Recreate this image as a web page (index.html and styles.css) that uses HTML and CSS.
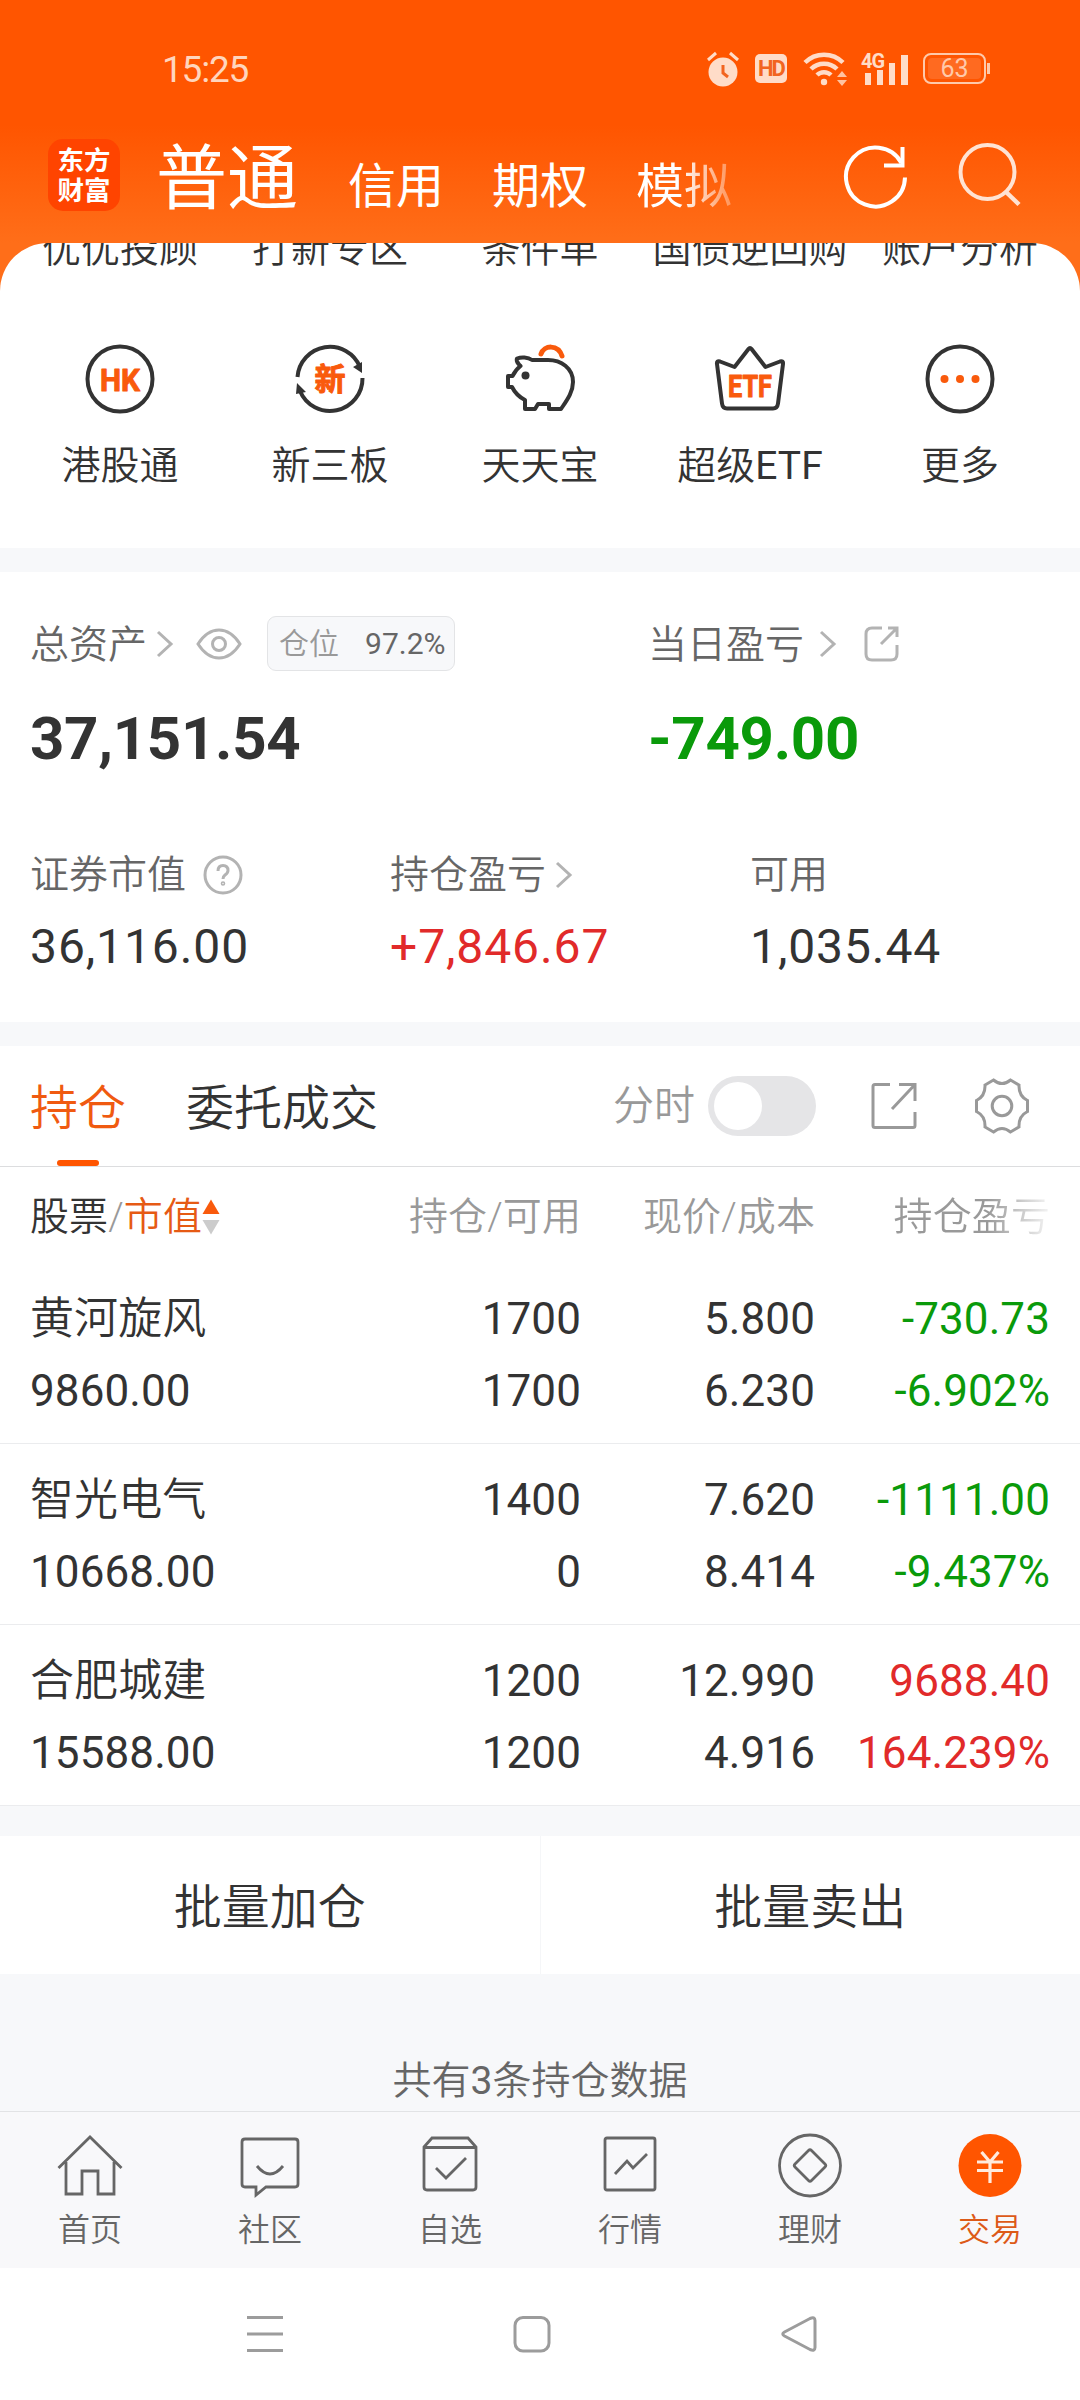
FILE: index.html
```html
<!DOCTYPE html>
<html lang="zh-CN">
<head>
  <meta charset="UTF-8">
  <meta name="viewport" content="width=device-width, initial-scale=1.0">
  <title>东方财富 - 交易</title>
  <link rel="stylesheet" href="styles.css">
</head>
<body>
  <header class="header">
    <div class="status-bar">
      <span class="time">15:25</span>
      <div class="status-icons">
        <svg class="alarm" width="34" height="38" viewBox="0 0 34 38">
          <circle cx="17" cy="22" r="14.5" fill="#ffdcc8"/>
          <path d="M2 10L10 3M32 10L24 3" stroke="#ffdcc8" stroke-width="3" fill="none"/>
          <path d="M17 15v8l5 4" stroke="#f26420" stroke-width="3" fill="none"/>
        </svg>
        <span class="hd">HD</span>
        <svg class="wifi" width="46" height="38" viewBox="0 0 46 38">
          <g fill="none" stroke="#ffdcc8" stroke-width="4.500">
            <path d="M2 12.500a27 27 0 0 1 38 0"/>
            <path d="M8 19a18.500 18.500 0 0 1 26 0"/>
            <path d="M14 25a10 10 0 0 1 14 0"/>
          </g>
          <circle cx="21" cy="32" r="3.200" fill="#ffdcc8"/>
          <path d="M34 27l5-6 5 6zM34 30h10l-5 6z" fill="#ffc3a0"/>
        </svg>
        <div class="signal">
          <span class="net">4G</span>
          <svg width="48" height="38" viewBox="0 0 48 38">
            <path d="M4 23h6v12H4zM16 20h6v15h-6zM28 13h6v22h-6zM40 5h7v30h-7z" fill="#ffdcc8"/>
          </svg>
        </div>
        <div class="battery"><span>63</span></div>
      </div>
    </div>
    <div class="top-nav">
      <div class="logo">东方<br>财富</div>
      <div class="accounts">
        <span class="account active">普通</span>
        <span class="account">信用</span>
        <span class="account">期权</span>
        <span class="account fade">模拟</span>
      </div>
      <svg class="refresh" width="66" height="66" viewBox="0 0 66 66">
        <path d="M62 33.500A29.500 29.500 0 1 1 58.500 19" fill="none" stroke="#fff" stroke-width="4"/>
        <path d="M59.500 3v18.500H41" fill="none" stroke="#fff" stroke-width="4"/>
      </svg>
      <svg class="search" width="66" height="66" viewBox="0 0 66 66">
        <circle cx="30.500" cy="29" r="27" fill="none" stroke="#ffe3d3" stroke-width="4"/>
        <path d="M48 48L62 61.500" stroke="#ffe3d3" stroke-width="4.500"/>
      </svg>
    </div>
  </header>

  <!-- Shortcuts -->
  <section class="shortcuts">
    <div class="grid clipped">
      <span>优优投顾</span>
      <span>打新专区</span>
      <span>条件单</span>
      <span>国债逆回购</span>
      <span>账户分析</span>
    </div>
    <div class="grid">
      <div class="shortcut">
        <svg width="72" height="72" viewBox="0 0 72 72">
          <circle cx="36" cy="36" r="32.500" fill="none" stroke="#333" stroke-width="4"/>
          <text x="36" y="47.500" class="icon-text" font-size="32" textLength="40" lengthAdjust="spacingAndGlyphs">HK</text>
        </svg>
        <span>港股通</span>
      </div>
      <div class="shortcut">
        <svg width="72" height="72" viewBox="0 0 72 72">
          <path d="M3.500 34A32.500 32.500 0 0 1 66 24M68.500 35A32.500 32.500 0 0 1 6 48" fill="none" stroke="#333" stroke-width="4"/>
          <path d="M59 24l9-5v11zM3 40l9 9-10 2z" fill="#333"/>
          <text x="36" y="47" class="icon-text" font-size="31">新</text>
        </svg>
        <span>新三板</span>
      </div>
      <div class="shortcut">
        <svg width="72" height="72" viewBox="0 0 72 72">
          <path d="M28 17C24 14 17 14 13 15.500c-1 3 1 5 3.500 7.500-4 3-6 6-8 10H4v11h4c3 6 7 10 13 13v9h10l3-5h11v5h12c6-9 12-17 12-27 0-14-12-22-25-22z" fill="none" stroke="#333" stroke-width="4" stroke-linejoin="round"/>
          <circle cx="21.500" cy="32.500" r="4" fill="#333"/>
          <path d="M37 11c3-9 17-10 21 2" fill="none" stroke="#f95a0c" stroke-width="5" stroke-linecap="round"/>
        </svg>
        <span>天天宝</span>
      </div>
      <div class="shortcut">
        <svg width="72" height="72" viewBox="0 0 72 72">
          <path d="M6 18.500l14.500 5.500L34.500 6q1.500-2 3 0l14 18L66 18.500q3.500-1 3 2.500l-5 39.500q-.7 5-5 5H13q-4.300 0-5-5L3 21q-.5-3.500 3-2.500z" fill="none" stroke="#333" stroke-width="4" stroke-linejoin="round"/>
          <text x="36" y="53.500" class="icon-text" font-size="31" textLength="44" lengthAdjust="spacingAndGlyphs">ETF</text>
        </svg>
        <span>超级<span class="latin">ETF</span></span>
      </div>
      <div class="shortcut">
        <svg width="72" height="72" viewBox="0 0 72 72">
          <circle cx="36" cy="36" r="32.500" fill="none" stroke="#333" stroke-width="4"/>
          <g fill="#f95a0c">
            <circle cx="20.500" cy="36" r="4"/>
            <circle cx="36" cy="36" r="4"/>
            <circle cx="51.500" cy="36" r="4"/>
          </g>
        </svg>
        <span>更多</span>
      </div>
    </div>
  </section>

  <!-- Assets -->
  <section class="assets">
    <div class="total-row">
      <div class="total">
        <div class="label">
          总资产
          <svg class="chevron first" width="18" height="28" viewBox="0 0 18 28"><path d="M2 2l13 12L2 26"/></svg>
          <svg class="eye" width="46" height="32" viewBox="0 0 46 32">
            <path d="M2 16Q11 2 23 2t21 14Q35 30 23 30T2 16z"/>
            <circle cx="23" cy="16" r="6.500"/>
          </svg>
          <span class="position"><em>仓位</em><span class="latin">97.2%</span></span>
        </div>
        <div class="big">37,151.54</div>
      </div>
      <div class="today">
        <div class="label">
          当日盈亏
          <svg class="chevron" width="18" height="28" viewBox="0 0 18 28"><path d="M2 2l13 12L2 26"/></svg>
          <svg class="share" width="36" height="36" viewBox="0 0 36 36">
            <path d="M18 2H8Q2 2 2 8v20q0 6 6 6h19q6 0 6-6V19M24 2h9v9M33 2L17 18"/>
          </svg>
        </div>
        <div class="big green">-749.00</div>
      </div>
    </div>
    <div class="detail-row">
      <div class="detail">
        <div class="label">
          证券市值
          <svg class="help" width="40" height="40" viewBox="0 0 40 40">
            <circle cx="20" cy="20" r="18"/>
            <path d="M15 16q0-5.500 5-5.500t5 5q0 2.500-3 4.500-2 1.500-2 4"/>
            <circle cx="20" cy="28.500" r=".8"/>
          </svg>
        </div>
        <div class="value">36,116.00</div>
      </div>
      <div class="detail">
        <div class="label">
          持仓盈亏
          <svg class="chevron near" width="18" height="28" viewBox="0 0 18 28"><path d="M2 2l13 12L2 26"/></svg>
        </div>
        <div class="value red">+7,846.67</div>
      </div>
      <div class="detail">
        <div class="label">可用</div>
        <div class="value">1,035.44</div>
      </div>
    </div>
  </section>

  <!-- Holdings -->
  <section class="holdings">
    <div class="tabs">
      <span class="tab active">持仓</span>
      <span class="tab">委托成交</span>
      <span class="minute">分时</span>
      <span class="toggle"></span>
      <svg class="open" width="48" height="48" viewBox="0 0 48 48">
        <path d="M20 2.500H5Q3 2.500 3 4.500v39q0 2 2 2h38q2 0 2-2V30M29 2.500h16V19M45 2.500L22 27"/>
      </svg>
      <svg class="gear" width="56" height="56" viewBox="0 0 56 56">
        <path d="M19.500 2q8.500 7 17 0L45 7q-.5 11 8.500 15.500v11Q44.500 38 45 49l-8.500 5q-8.500-7-17 0L11 49q.5-11-8.500-15.500v-11Q11.500 18 11 7z"/>
        <circle cx="28" cy="28" r="9.800"/>
      </svg>
    </div>
    <div class="row head">
      <div class="sort"><span class="dark">股票</span>/<span class="orange">市值</span>
        <svg width="18" height="36" viewBox="0 0 18 36">
          <path d="M9 .5l8.500 14.500H.5z" fill="#f95a0c"/>
          <path d="M9 35.500l8.500-14.500H.5z" fill="#ccc"/>
        </svg>
      </div>
      <div>持仓/可用</div>
      <div>现价/成本</div>
      <div class="cut">持仓盈亏</div>
    </div>
    <div class="row">
      <div><span class="name">黄河旋风</span><br>9860.00</div>
      <div>1700<br>1700</div>
      <div>5.800<br>6.230</div>
      <div class="green">-730.73<br>-6.902%</div>
    </div>
    <div class="row">
      <div><span class="name">智光电气</span><br>10668.00</div>
      <div>1400<br>0</div>
      <div>7.620<br>8.414</div>
      <div class="green">-1111.00<br>-9.437%</div>
    </div>
    <div class="row">
      <div><span class="name">合肥城建</span><br>15588.00</div>
      <div>1200<br>1200</div>
      <div>12.990<br>4.916</div>
      <div class="red">9688.40<br>164.239%</div>
    </div>
  </section>

  <div class="batch">
    <button>批量加仓</button>
    <button>批量卖出</button>
  </div>
  <p class="count">共有<span class="latin">3</span>条持仓数据</p>

  <nav class="tab-bar">
    <a>
      <svg width="66" height="66" viewBox="0 0 66 66"><path d="M1.500 35L33 4l31.500 31M9 29v32h16V38h16v23h16V29"/></svg>
      首页
    </a>
    <a>
      <svg width="66" height="66" viewBox="0 0 66 66"><path d="M8 6h50q3 0 3 3v42q0 3-3 3H29l-10 8v-8H8q-3 0-3-3V9q0-3 3-3zM20 33q13 16 26 0"/></svg>
      社区
    </a>
    <a>
      <svg width="66" height="66" viewBox="0 0 66 66"><path d="M7 14l8-9h36l8 9v40q0 3-3 3H10q-3 0-3-3zM7 14.500h52M19 35l10 10 20-20"/></svg>
      自选
    </a>
    <a>
      <svg width="66" height="66" viewBox="0 0 66 66"><path d="M10 5h46q2 0 2 2v48q0 2-2 2H10q-2 0-2-2V7q0-2 2-2zM18 41l12-13 6 7 14-14"/></svg>
      行情
    </a>
    <a>
      <svg width="66" height="66" viewBox="0 0 66 66"><circle cx="33" cy="32.500" r="30.500"/><path d="M31.500 17.500q1.500-1.500 3 0l13.500 13.500q1.500 1.500 0 3L34.500 47.500q-1.500 1.500-3 0L18 34q-1.500-1.500 0-3z"/></svg>
      理财
    </a>
    <a class="active">
      <svg width="66" height="66" viewBox="0 0 66 66"><circle class="disc" cx="33" cy="32.500" r="31.500"/><path class="yen" d="M24.500 19L33 29l8.500-10M20 29h26M20 37.500h26M33 29v21"/></svg>
      交易
    </a>
  </nav>

  <div class="system-nav">
    <svg width="40" height="40" viewBox="0 0 40 40"><path d="M2 3.500h36M2 20h36M2 36.500h36"/></svg>
    <svg width="40" height="40" viewBox="0 0 40 40"><rect x="3" y="3.500" width="34" height="33.500" rx="8"/></svg>
    <svg width="40" height="40" viewBox="0 0 40 40"><path d="M31 4.500q5-2 5 2v27q0 4-5 2L5.500 22q-3.500-2 0-4z"/></svg>
  </div>
</body>
</html>
```
FILE: styles.css
```css
* {
  box-sizing: border-box;
  margin: 0;
  padding: 0;
}

body {
  width: 1080px;
  height: 2400px;
  overflow: hidden;
  font-family: Roboto, "Noto Sans CJK SC", sans-serif;
  font-weight: 350;
  color: #333;
  background-color: #f7f8fa;
}

svg {
  display: block;
  flex-shrink: 0;
}

.latin {
  font-weight: 400;
}

.green {
  color: #0a9a0a;
}

.red {
  color: #e12a2a;
}

.orange {
  color: #e65a14;
}

/* header */
.header {
  height: 292px;
  background: linear-gradient(#ff5500 125px, #ff6e19 243px);
}

.status-bar {
  display: flex;
  align-items: center;
  justify-content: space-between;
  height: 139px;
  padding: 0 93px 0 162px;
}

.time {
  font-size: 37px;
  font-weight: 400;
  letter-spacing: -1.2px;
  color: #ffd5bd;
}

.status-icons {
  display: flex;
  align-items: center;
  height: 38px;
  margin-top: -2px;
}

.hd {
  width: 32px;
  height: 29px;
  margin: 0 16px 0 15px;
  border-radius: 5px;
  background-color: #ffdcc8;
  color: #f26420;
  font-size: 22px;
  font-weight: 700;
  line-height: 30px;
  letter-spacing: -2px;
  text-align: center;
}

.signal {
  position: relative;
  margin: 0 14px 0 12px;
}

.net {
  position: absolute;
  left: 0;
  top: 1px;
  font-size: 20px;
  font-weight: 700;
  line-height: 20px;
  letter-spacing: -1px;
  color: #ffdcc8;
}

.battery {
  position: relative;
  width: 63px;
  height: 31px;
  margin-right: 1px;
  border: 2px solid #ffc9aa;
  border-radius: 8px;
  padding: 3px;
}

.battery span {
  display: block;
  height: 21px;
  border-radius: 4px;
  background-color: #ff6a20;
  color: #ffc9aa;
  font-size: 25px;
  font-weight: 400;
  line-height: 22px;
  text-align: center;
}

.battery::after {
  content: "";
  position: absolute;
  right: -6px;
  top: 8px;
  width: 3px;
  height: 11px;
  background-color: #ffc9aa;
}

.top-nav {
  display: flex;
  padding: 0 57px 0 48px;
}

.logo {
  width: 72px;
  height: 72px;
  padding-top: 7px;
  border-radius: 15px;
  background-color: #ff4400;
  color: #fff;
  font-size: 26.5px;
  font-weight: 700;
  line-height: 30px;
  text-align: center;
}

.accounts {
  display: flex;
  align-items: baseline;
  flex: 1;
  height: 90px;
  margin-top: 4px;
  margin-left: 36px;
  color: #fff;
  font-size: 48px;
  font-weight: 400;
  line-height: 72px;
}

.account {
  margin-right: 48px;
}

.account.active {
  font-size: 71px;
  margin-right: 50px;
}

.account.fade {
  background: linear-gradient(90deg, #fff 45%, rgba(255, 255, 255, 0.3));
  background-clip: text;
  color: transparent;
}

.refresh {
  margin: 5px 0 0;
}

.search {
  margin: 4px 0 0 48px;
}

/* shortcuts */
.shortcuts {
  height: 305px;
  margin-top: -49px;
  border-radius: 48px 48px 0 0;
  overflow: hidden;
  background-color: #fff;
  font-size: 39px;
  line-height: 40px;
}

.grid {
  display: grid;
  grid-template-columns: repeat(5, 210px);
  justify-content: center;
  text-align: center;
  white-space: nowrap;
}

.grid.clipped {
  margin: -14px 0 74px;
}

.grid.clipped span {
  margin: 0 -20px;
}

.shortcut {
  display: flex;
  flex-direction: column;
  align-items: center;
  gap: 31px;
}

.icon-text {
  fill: #f95a0c;
  stroke: #f95a0c;
  stroke-width: 1;
  stroke-linejoin: round;
  font-weight: 700;
  text-anchor: middle;
}

/* assets */
.assets {
  height: 450px;
  margin-top: 24px;
  padding: 44px 30px 0;
  background-color: #fff;
}

.total-row {
  display: grid;
  grid-template-columns: 618px 1fr;
}

.label {
  display: flex;
  align-items: center;
  height: 58px;
  color: #666;
  font-size: 39px;
  line-height: 44px;
}

.label svg {
  fill: none;
  stroke: #b3b3b3;
  stroke-width: 3;
}

.total-row .label svg {
  margin-bottom: 3px;
}

.label .chevron {
  margin-left: 15px;
}

.label .chevron.first {
  margin-left: 9px;
}

.label .chevron.near {
  margin-left: 9px;
}

.label .eye {
  margin-left: 22px;
}

.label .share {
  margin-left: 27px;
}

.label .help {
  margin-left: 17px;
}

.position {
  display: flex;
  align-items: center;
  height: 55px;
  margin-bottom: 3px;
  margin-left: 25px;
  padding: 0 9px 0 11px;
  border: 1px solid #e3e4e6;
  border-radius: 9px;
  background-color: #f7f8fa;
  font-size: 30px;
}

.position em {
  margin-right: 26px;
  font-style: normal;
  color: #999;
}

.big {
  margin-top: 30px;
  font-size: 60px;
  font-weight: 700;
  line-height: 70px;
  letter-spacing: -0.3px;
}

.detail-row {
  display: grid;
  grid-template-columns: repeat(3, 360px);
  margin-top: 72px;
}

.value {
  margin-top: 13px;
  font-size: 48px;
  font-weight: 400;
  line-height: 60px;
  letter-spacing: 0.9px;
}

/* holdings */
.holdings {
  margin-top: 24px;
  background-color: #fff;
}

.tabs {
  display: flex;
  align-items: center;
  height: 121px;
  padding: 0 50px 0 30px;
  border-bottom: 1px solid #dcdddf;
}

.tabs svg {
  fill: none;
  stroke: #999;
  stroke-width: 3;
}

.tab {
  position: relative;
  height: 120px;
  margin-right: 60px;
  font-size: 48px;
  line-height: 125px;
}

.tab.active {
  color: #f05a10;
}

.tab.active::after {
  content: "";
  position: absolute;
  left: 27px;
  bottom: 0;
  width: 42px;
  height: 6px;
  border-radius: 3px;
  background-color: #ff5500;
}

.minute {
  margin-left: auto;
  color: #999;
  font-size: 41px;
  line-height: 46px;
}

.toggle {
  width: 108px;
  height: 60px;
  margin: 0 54px 0 13px;
  padding: 6px;
  border-radius: 30px;
  background-color: #e5e5e7;
}

.toggle::before {
  content: "";
  display: block;
  width: 48px;
  height: 48px;
  border-radius: 50%;
  background-color: #fff;
}

.gear {
  margin-left: 56px;
}

.row {
  display: grid;
  grid-template-columns: 317px 234px 234px 235px;
  height: 181px;
  padding: 20px 30px 0;
  border-bottom: 1px solid #ebecee;
  font-size: 44px;
  font-weight: 400;
  line-height: 72px;
  letter-spacing: 0.1px;
  text-align: right;
}

.row > div:first-child {
  text-align: left;
}

.name {
  font-weight: 350;
}

.row.head {
  height: 96px;
  padding-top: 0;
  border-bottom: none;
  color: #999;
  font-size: 39px;
  font-weight: 350;
  line-height: 101px;
}

.sort {
  display: flex;
  align-items: center;
  height: 100px;
}

.sort svg {
  margin-top: -1px;
}

.dark {
  color: #333;
}

.cut {
  justify-self: end;
  width: 157px;
  white-space: nowrap;
  background: linear-gradient(90deg, #999 60%, rgba(153, 153, 153, 0.1));
  background-clip: text;
  color: transparent;
}

.batch {
  display: flex;
  height: 138px;
  margin-top: 30px;
  background-color: #fff;
}

.batch button {
  flex: 1;
  padding-bottom: 4px;
  border: none;
  background: none;
  color: #333;
  font-family: inherit;
  font-size: 48px;
  font-weight: 350;
}

.batch button + button {
  border-left: 1px solid #f5f6f8;
}

.count {
  height: 137px;
  padding-top: 77px;
  color: #666;
  font-size: 39px;
  line-height: 60px;
  text-align: center;
}

/* bottom bars */
.tab-bar {
  display: flex;
  height: 157px;
  border-top: 1px solid #e2e3e5;
  background-color: #f8f8fa;
}

.tab-bar a {
  display: flex;
  flex-direction: column;
  align-items: center;
  flex: 1;
  gap: 11px;
  padding-top: 21px;
  color: #666;
  font-size: 32px;
  line-height: 40px;
}

.tab-bar svg {
  fill: none;
  stroke: #666;
  stroke-width: 2.8;
}

.tab-bar .active {
  color: #dd5a18;
}

.tab-bar .disc {
  fill: #ff5500;
  stroke: none;
}

.tab-bar .yen {
  stroke: #ffeadd;
  stroke-width: 3.2;
}

.system-nav {
  display: flex;
  justify-content: space-between;
  height: 132px;
  padding: 46px 261px 0 245px;
  background-color: #fff;
}

.system-nav svg {
  fill: none;
  stroke: #9c9c9c;
  stroke-width: 3;
}
```
